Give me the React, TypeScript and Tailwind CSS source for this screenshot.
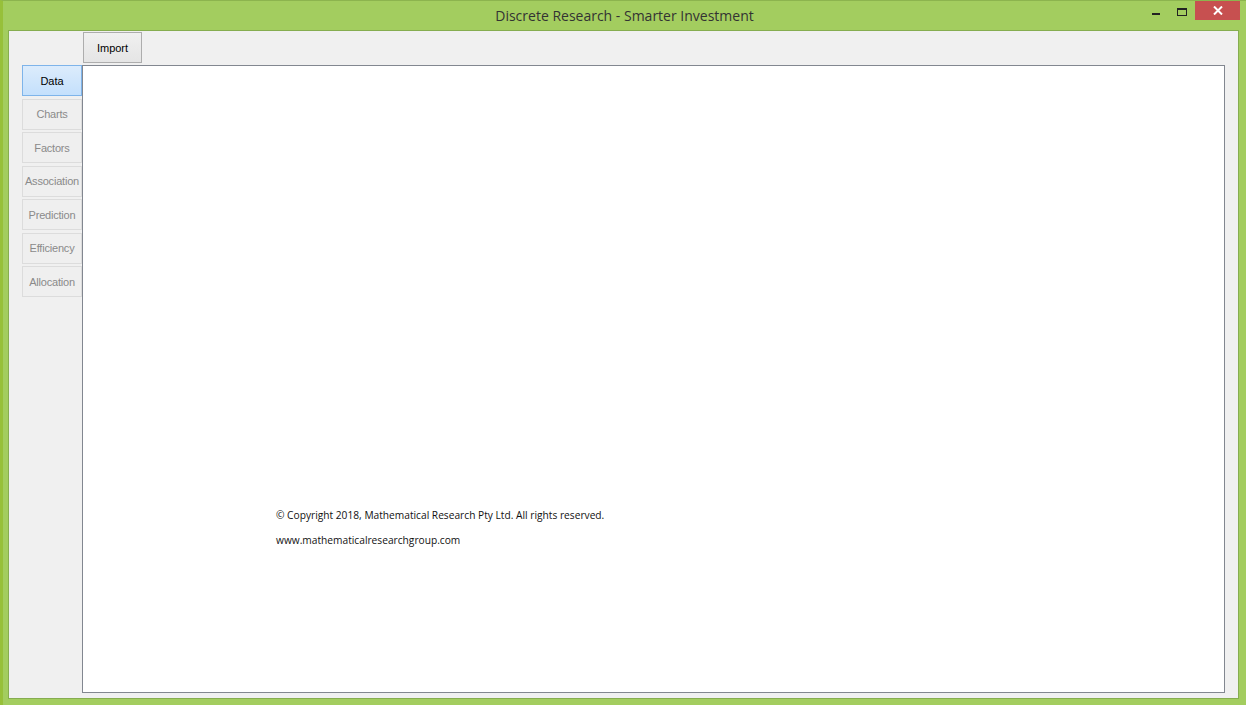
const TABS = ['Data', 'Charts', 'Factors', 'Association', 'Prediction', 'Efficiency', 'Allocation'];

export default function App() {
  return (
    <div
      className="w-[1246px] h-[705px] bg-[#a3cd5f] border-t border-[#8cb44e] border-l-[3px] border-l-[#97c03a] flex flex-col overflow-hidden"
      style={{ fontFamily: '"Liberation Sans", Arial, sans-serif' }}
    >
      {/* title bar */}
      <div className="h-[29px] flex items-start relative shrink-0">
        <div
          className="flex-1 text-center text-[14px] text-[#333333] pt-[5px] leading-[20px]"
          style={{ fontFamily: '"Open Sans", "Noto Sans", sans-serif' }}
        >
          Discrete Research - Smarter Investment
        </div>
        <div className="absolute right-[6px] top-0 flex items-start">
          <div className="w-[26px] h-[20px] flex items-start justify-center pt-[12px]">
            <div className="w-[8px] h-[2px] bg-[#222]" />
          </div>
          <div className="w-[26px] h-[20px] flex items-start justify-center pt-[7px]">
            <div className="w-[10px] h-[8px] border border-t-2 border-[#222]" />
          </div>
          <div className="w-[45px] h-[19px] bg-[#c75050] flex items-center justify-center">
            <svg width="10" height="9" viewBox="0 0 10 9">
              <path d="M1 0.5 L9 8.5 M9 0.5 L1 8.5" stroke="#fff" strokeWidth="2" />
            </svg>
          </div>
        </div>
      </div>

      {/* client area */}
      <div className="ml-[5px] mr-[7px] h-[669px] border border-[#86ad50] bg-[#f0f0f0] flex flex-col">
        <div className="pl-[74px] pt-[1px] h-[34px]">
          <button className="w-[59px] h-[31px] pt-[2px] border border-[#adadad] bg-gradient-to-b from-[#f0f0f0] to-[#e5e5e5] text-[11px] text-black">
            Import
          </button>
        </div>
        <div className="flex flex-1 pl-[13px]">
          <div className="w-[60px] flex flex-col gap-[2.5px]">
            {TABS.map((t, i) =>
              i === 0 ? (
                <div key={t} className="h-[31px] pt-[2px] border border-[#7eb4ea] bg-gradient-to-b from-[#dcecfc] to-[#c4e0fc] flex items-center justify-center text-[11px] text-black">
                  {t}
                </div>
              ) : (
                <div key={t} className="h-[31px] pt-[1px] border border-[#dcdcdc] bg-[#efefef] flex items-center justify-center text-[11px] text-[#8a8a8a] whitespace-nowrap tracking-[-0.2px]">
                  {t}
                </div>
              )
            )}
          </div>
          <div className="w-[1143px] h-[628px] border border-[#828790] bg-white flex flex-col">
            <div
              className="mt-[442px] ml-[193px] text-[10.2px] text-[#111] leading-[14px]"
              style={{ fontFamily: '"Open Sans", "Noto Sans", sans-serif' }}
            >
              <div>© Copyright 2018, Mathematical Research Pty Ltd. All rights reserved.</div>
              <div className="mt-[11px]">www.mathematicalresearchgroup.com</div>
            </div>
          </div>
        </div>
      </div>
    </div>
  );
}
